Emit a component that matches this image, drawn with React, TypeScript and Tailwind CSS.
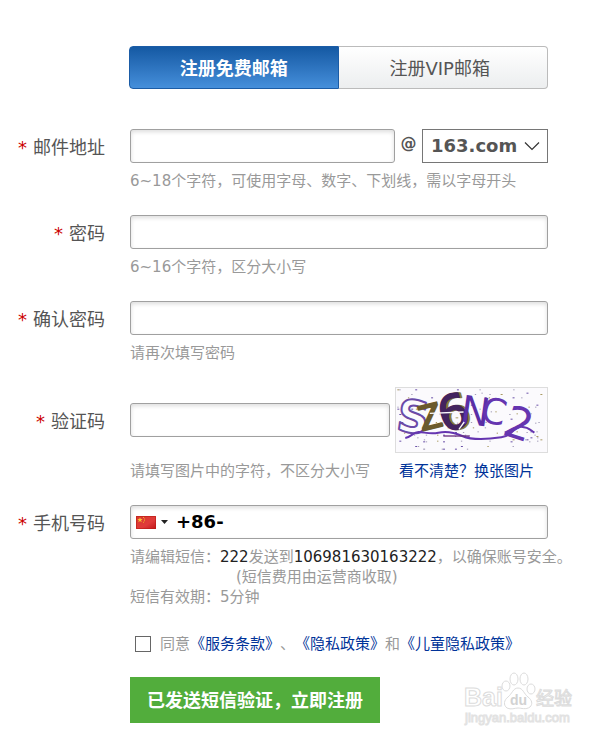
import React, { useState } from "react";

interface FieldRowProps {
  id: string;
  label: string;
  labelClass?: string;
  children: React.ReactNode;
}

function FieldRow({ id, label, labelClass = "h-[34px]", children }: FieldRowProps) {
  return (
    <div className="grid grid-cols-[105px_minmax(0,1fr)] gap-x-[25px]">
      <label
        htmlFor={id}
        className={`flex items-center justify-end gap-1.5 whitespace-nowrap pt-1 text-lg text-[#555] ${labelClass}`}
      >
        <span className="text-[#c00]">*</span>
        {label}
      </label>
      <div>{children}</div>
    </div>
  );
}

const inputClass =
  "block h-[34px] w-full min-w-0 rounded-[3px] border border-[#a0a0a0] bg-white px-2 text-lg font-bold text-black shadow-[inset_0_2px_4px_#ddd] outline-none";
const hintClass = "mt-2 whitespace-nowrap text-[15px] leading-5 text-[#999]";
const linkClass = "inline-block text-[#039] hover:underline";

// noise specks behind the captcha characters
const specks = Array.from({ length: 120 }, (_, i) => ({
  x: 36 + ((i * 173 + i * i * 7) % 444),
  y: 30 + ((i * 97 + i * i * 3) % 182),
  w: i % 3 === 0 ? 6 : 4,
  color: i % 4 === 0 ? "#a89a62" : i % 3 === 0 ? "#6a50a8" : "#a39db8",
}));

function Captcha() {
  return (
    <svg
      viewBox="32 26 456 192"
      preserveAspectRatio="none"
      className="block h-full w-full overflow-visible"
      aria-hidden="true"
    >
      <rect x="32" y="26" width="456" height="192" fill="#fbfafd" />
      {specks.map((s, i) => (
        <rect key={i} x={s.x} y={s.y} width={s.w} height="3" fill={s.color} />
      ))}
      <g fontFamily="'DejaVu Sans', sans-serif" strokeLinejoin="round">
        <text x="36" y="158" fontSize="134" fontWeight="bold" fill="#fbfafd" stroke="#6a4aa8" strokeWidth="6" transform="rotate(8 70 110)">S</text>
        <text x="100" y="148" fontSize="100" fill="#6b5a2c" stroke="#6b5a2c" strokeWidth="6" transform="rotate(-14 135 110)">Z</text>
        <text x="166" y="152" fontSize="142" fill="#8a7a3a" stroke="#8a7a3a" strokeWidth="6" transform="rotate(-16 200 100)">6</text>
        <text x="159" y="150" fontSize="142" fill="#43245f" stroke="#43245f" strokeWidth="5" transform="rotate(-16 200 100)">6</text>
        <text x="228" y="136" fontSize="118" fill="#5a2ea6" transform="rotate(8 265 90)">N</text>
        <text x="290" y="132" fontSize="108" fill="#6535b0" transform="rotate(14 320 95)">C</text>
        <text x="362" y="178" fontSize="132" fill="#6535b0" transform="rotate(18 400 130)">2</text>
      </g>
      <path
        d="M60 176 C80 172 84 158 100 158 S135 166 160 160 S205 158 232 170 S310 180 350 174 S385 140 410 142 S435 150 450 160"
        fill="none"
        stroke="#6535b0"
        strokeWidth="6"
      />
      <path d="M175 170 H255" stroke="#6a3080" strokeWidth="4" />
      <path d="M134 102 L236 98 M222 150 L238 128" stroke="#fbfafd" strokeWidth="4" />
    </svg>
  );
}

function ChinaFlag() {
  return (
    <svg width="20" height="13" viewBox="0 0 20 13" aria-hidden="true">
      <defs>
        <linearGradient id="flag" x1="0" y1="0" x2="1" y2="1">
          <stop offset="0" stopColor="#d8372c" />
          <stop offset="0.6" stopColor="#e03a3a" />
          <stop offset="1" stopColor="#c01518" />
        </linearGradient>
      </defs>
      <rect width="20" height="13" fill="url(#flag)" />
      <path d="M0.5 12.5V0.5H19.5V12.5Z" fill="none" stroke="#b81a14" strokeOpacity="0.6" />
      <path d="M4 1.2L4.7 3.1H6.7L5.1 4.3L5.7 6.2L4 5L2.3 6.2L2.9 4.3L1.3 3.1H3.3Z" fill="#f6c431" />
      <path d="M7 1h1v1H7zM8 2.5h1v1H8zM8 4.3h1v1H8zM7 5.8h1v1H7z" fill="#f0a92c" />
    </svg>
  );
}

function Watermark() {
  return (
    <svg width="112" height="56" viewBox="463 670 112 56" className="overflow-visible" aria-hidden="true">
      <g fill="#fff" stroke="#dcdcdc" strokeWidth="1">
        <text x="464" y="705" fontSize="25" fontWeight="bold" fontFamily="'Liberation Sans', sans-serif">Bai</text>
        <ellipse cx="506" cy="685" rx="4" ry="5" />
        <ellipse cx="514" cy="678" rx="4" ry="6" />
        <ellipse cx="524" cy="678" rx="4" ry="6" />
        <ellipse cx="531" cy="688" rx="4" ry="5" />
        <path d="M518 687C513 687 512 693 508 696C504 699 503 704 507 707C511 709 515 707 518 707S526 709 530 706C533 703 532 699 528 696C524 693 523 687 518 687Z" />
        <text x="536" y="704" fontSize="18" fontFamily="'Noto Sans CJK SC', sans-serif">经验</text>
      </g>
      <text x="510" y="704" fontSize="14" fontWeight="bold" fontFamily="'Liberation Sans', sans-serif" fill="#d2d2d2">du</text>
      <text x="465" y="721" fontSize="13" fontFamily="'Liberation Sans', sans-serif" fill="#fff" stroke="#e2e2e2" strokeWidth="1">
        jingyan.baidu.com
      </text>
    </svg>
  );
}

export default function App() {
  const [phone, setPhone] = useState("+86-");
  const [agreed, setAgreed] = useState(false);

  return (
    <main className="overflow-x-hidden bg-white pt-[46px] pb-3 font-['DejaVu_Sans','Noto_Sans_CJK_SC',sans-serif]">
      <form className="relative flex flex-col gap-6 pr-[59px]" onSubmit={(e) => e.preventDefault()}>
        <div className="mb-4 ml-[129px] grid h-[43px] grid-cols-2 text-lg">
          <button
            type="button"
            className="rounded-l-[4px] border border-[#1b5ca6] bg-linear-to-b from-[#1459a3] to-[#458fdb] pt-0.5 font-bold text-white"
          >
            注册免费邮箱
          </button>
          <button
            type="button"
            className="rounded-r-[4px] border border-l-0 border-[#bbb] bg-linear-to-b from-white to-[#eceeef] pt-0.5 pr-1.5 text-[#555]"
          >
            注册VIP邮箱
          </button>
        </div>

        <FieldRow id="mail" label="邮件地址">
          <div className="flex items-center">
            <input id="mail" type="text" className={inputClass} />
            <span className="w-[27px] shrink-0 pb-1 text-center text-base font-bold text-[#555]">@</span>
            <div className="relative w-[126px] shrink-0">
              <select
                aria-label="邮箱域名"
                className="block h-[34px] w-full appearance-none border border-[#767676] bg-white pl-2 text-lg font-bold text-[#555] outline-none"
              >
                <option>163.com</option>
                <option>126.com</option>
                <option>yeah.net</option>
              </select>
              <svg
                className="pointer-events-none absolute top-3 right-2 h-2.5 w-4"
                viewBox="0 0 16 10"
                fill="none"
                stroke="#333"
                strokeWidth="1.2"
                aria-hidden="true"
              >
                <path d="M1 1.5L8 8.5L15 1.5" />
              </svg>
            </div>
          </div>
          <p className={hintClass}>6~18个字符，可使用字母、数字、下划线，需以字母开头</p>
        </FieldRow>

        <FieldRow id="password" label="密码">
          <input id="password" type="password" className={inputClass} />
          <p className={hintClass}>6~16个字符，区分大小写</p>
        </FieldRow>

        <FieldRow id="confirm" label="确认密码">
          <input id="confirm" type="password" className={inputClass} />
          <p className={hintClass}>请再次填写密码</p>
        </FieldRow>

        <FieldRow id="captcha" label="验证码" labelClass="h-[66px]">
          <div className="grid grid-cols-[minmax(0,1fr)_153px] items-center gap-x-[5px]">
            <input id="captcha" type="text" className={inputClass} />
            <div className="h-[66px] border border-[#ddd]">
              <Captcha />
            </div>
            <p className={hintClass}>请填写图片中的字符，不区分大小写</p>
            <p className={`${hintClass} pl-1`}>
              <a href="#captcha" className={linkClass}>看不清楚？换张图片</a>
            </p>
          </div>
        </FieldRow>

        <FieldRow id="phone" label="手机号码">
          <div className="flex h-[34px] items-center rounded-[3px] border border-[#a0a0a0] pl-[5px] shadow-[inset_0_2px_4px_#ddd]">
            <button type="button" aria-label="选择国家" className="flex items-center gap-[5px]">
              <ChinaFlag />
              <svg width="7" height="4" viewBox="0 0 7 4" aria-hidden="true">
                <path d="M0 0H7L3.5 4Z" fill="#222" />
              </svg>
            </button>
            <input
              id="phone"
              type="tel"
              value={phone}
              onChange={(e) => setPhone(e.target.value)}
              className="ml-2 min-w-0 flex-1 bg-transparent text-lg font-bold text-black outline-none"
            />
          </div>
          <div className={hintClass}>
            <p>
              请编辑短信：<span className="text-[#222]">222</span>发送到
              <span className="text-[#222]">106981630163222</span>，以确保账号安全。
            </p>
            <p className="pl-[106px]">(短信费用由运营商收取)</p>
            <p>短信有效期：5分钟</p>
          </div>
        </FieldRow>

        <div className="ml-[130px]">
          <div className="flex h-[26px] items-center gap-[9px] whitespace-nowrap pl-[5px] text-[15px] text-[#999]">
            <input
              id="agree"
              type="checkbox"
              checked={agreed}
              onChange={(e) => setAgreed(e.target.checked)}
              className="size-4 shrink-0 appearance-none border border-[#666] bg-white checked:bg-[#039]"
            />
            <p className="flex">
              <label htmlFor="agree">同意</label>
              <a href="#terms" className={linkClass}>《服务条款》</a>
              <span>、</span>
              <a href="#privacy" className={linkClass}>《隐私政策》</a>
              <span>和</span>
              <a href="#children" className={linkClass}>《儿童隐私政策》</a>
            </p>
          </div>
          <button type="submit" className="mt-5 block h-[46px] w-[250px] bg-[#52ad3c] pt-0.5 text-lg font-bold text-white">
            已发送短信验证，立即注册
          </button>
        </div>

        <div className="pointer-events-none absolute right-8 -bottom-1">
          <Watermark />
        </div>
      </form>
    </main>
  );
}
